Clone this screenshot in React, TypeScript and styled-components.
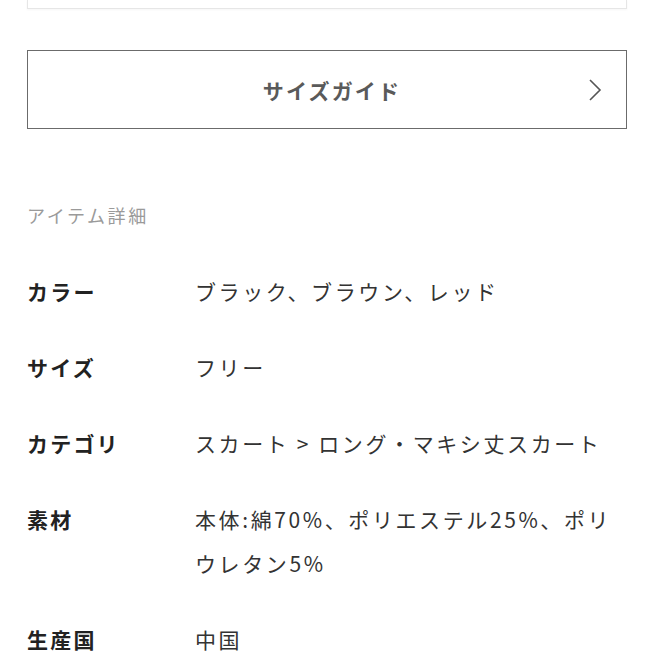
import React from "react";
import styled, { createGlobalStyle } from "styled-components";

const Global = createGlobalStyle`
  html, body { margin: 0; padding: 0; background: #fff; }
  body { font-family: "Noto Sans CJK JP", "Noto Sans", sans-serif; }
`;

const Page = styled.div`
  padding: 0 30px 0 27px;
  display: flex;
  flex-direction: column;
`;

const TopCard = styled.div`
  height: 8px;
  border: 1px solid #e6e6e6;
  border-top: none;
  box-shadow: 0 1px 2px rgba(0,0,0,0.04);
`;

const GuideButton = styled.button`
  margin-top: 41px;
  height: 79px;
  border: 1.5px solid #6b6b6b;
  background: #fff;
  display: flex;
  align-items: center;
  justify-content: center;
  position: relative;
  font-family: inherit;
  font-size: 21px;
  font-weight: 700;
  letter-spacing: 2.2px;
  color: #5a5a5a;
  padding: 0 0 0 10px;
`;

const Chevron = styled.svg`
  position: absolute;
  right: 24px;
  top: 50%;
  transform: translateY(-50%);
`;

const SectionTitle = styled.div`
  margin-top: 74px;
  font-size: 18px;
  letter-spacing: 2.6px;
  color: #9a9a9a;
  line-height: 24px;
`;

const List = styled.dl`
  margin: 42px 0 0;
  display: flex;
  flex-direction: column;
  gap: 32px;
`;

const Row = styled.div`
  display: grid;
  grid-template-columns: 168px 1fr;
  font-size: 21px;
  line-height: 44px;
`;

const Label = styled.dt`
  margin: 0;
  font-weight: 700;
  letter-spacing: 2.2px;
  color: #222;
`;

const Value = styled.dd`
  margin: 0;
  letter-spacing: 2.6px;
  color: #333;
`;

const rows: [string, string][] = [
  ["カラー", "ブラック、ブラウン、レッド"],
  ["サイズ", "フリー"],
  ["カテゴリ", "スカート > ロング・マキシ丈スカート"],
  ["素材", "本体:綿70%、ポリエステル25%、ポリウレタン5%"],
  ["生産国", "中国"],
];

export default function App() {
  return (
    <>
      <Global />
      <Page>
        <TopCard />
        <GuideButton type="button">
          サイズガイド
          <Chevron width="14" height="24" viewBox="0 0 14 24" fill="none">
            <path d="M2 2 L12 12 L2 22" stroke="#555" strokeWidth="1.6" />
          </Chevron>
        </GuideButton>
        <SectionTitle>アイテム詳細</SectionTitle>
        <List>
          {rows.map(([k, v]) => (
            <Row key={k}>
              <Label>{k}</Label>
              <Value>{v}</Value>
            </Row>
          ))}
        </List>
      </Page>
    </>
  );
}
